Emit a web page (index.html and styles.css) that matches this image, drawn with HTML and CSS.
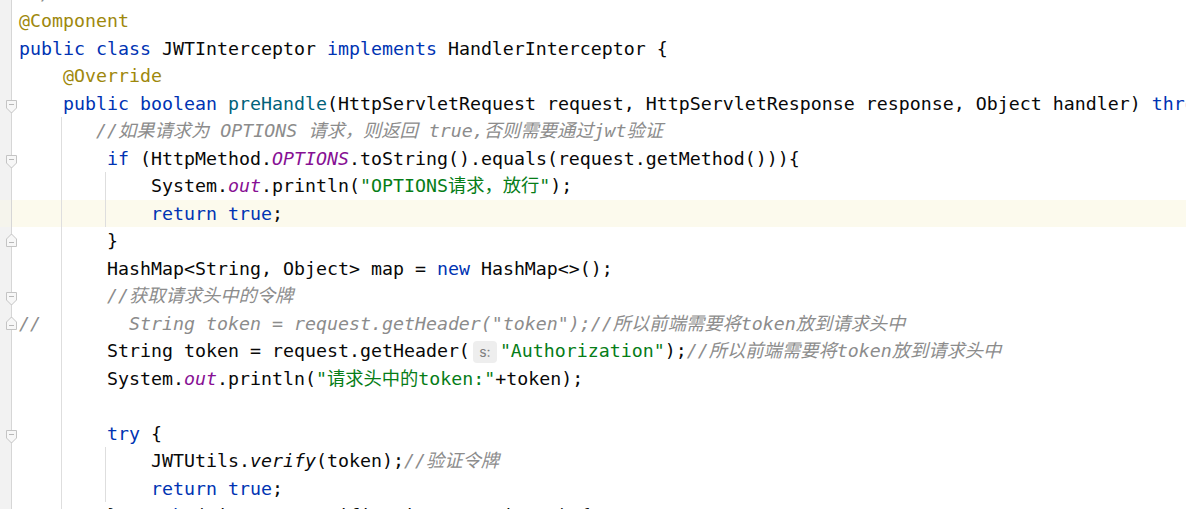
FILE: index.html
```html
<!DOCTYPE html>
<html lang="zh">
<head>
<meta charset="utf-8">
<title>JWTInterceptor.java</title>
<link rel="stylesheet" href="styles.css">
</head>
<body>
<div class="editor">
  <div class="row"><div class="gut"></div><div class="code"><span class="c"> */</span></div></div>
  <div class="row"><div class="gut"></div><div class="code"><span class="a">@Component</span></div></div>
  <div class="row"><div class="gut"></div><div class="code"><span class="k">public class</span> JWTInterceptor <span class="k">implements</span> HandlerInterceptor {</div></div>
  <div class="row"><div class="gut"></div><div class="code">    <span class="a">@Override</span></div></div>
  <div class="row"><div class="gut"><svg class="fold start" width="12" height="14" viewBox="0 0 12 14"><path d="M0.5 0.5H10.5V8L5.5 13L0.5 8Z"/><path d="M3 4.5H8"/></svg></div><div class="code">    <span class="k">public boolean</span> <span class="m">preHandle</span>(HttpServletRequest request, HttpServletResponse response, Object handler) <span class="k">throws</span> Exception {</div></div>
  <div class="row g1"><div class="gut"></div><div class="code">       <span class="c">//如果请求为 OPTIONS 请求，则返回 true,否则需要通过jwt验证</span></div></div>
  <div class="row g1"><div class="gut"><svg class="fold start" width="12" height="14" viewBox="0 0 12 14"><path d="M0.5 0.5H10.5V8L5.5 13L0.5 8Z"/><path d="M3 4.5H8"/></svg></div><div class="code">        <span class="k">if</span> (HttpMethod.<span class="f">OPTIONS</span>.toString().equals(request.getMethod())){</div></div>
  <div class="row g2"><div class="gut"></div><div class="code">            System.<span class="f">out</span>.println(<span class="s">"OPTIONS请求，放行"</span>);</div></div>
  <div class="row g2 cur"><div class="gut"></div><div class="code">            <span class="k">return true</span>;</div></div>
  <div class="row g1"><div class="gut"><svg class="fold end" width="12" height="14" viewBox="0 0 12 14"><path d="M0.5 13.5H10.5V6L5.5 1L0.5 6Z"/><path d="M3 9.5H8"/></svg></div><div class="code">        }</div></div>
  <div class="row g1"><div class="gut"></div><div class="code">        HashMap&lt;String, Object&gt; map = <span class="k">new</span> HashMap&lt;&gt;();</div></div>
  <div class="row g1"><div class="gut"><svg class="fold start" width="12" height="14" viewBox="0 0 12 14"><path d="M0.5 0.5H10.5V8L5.5 13L0.5 8Z"/><path d="M3 4.5H8"/></svg></div><div class="code">        <span class="c">//获取请求头中的令牌</span></div></div>
  <div class="row g1"><div class="gut"><svg class="fold end" width="12" height="14" viewBox="0 0 12 14"><path d="M0.5 13.5H10.5V6L5.5 1L0.5 6Z"/><path d="M3 9.5H8"/></svg></div><div class="code"><span class="c">//        String token = request.getHeader("token");//所以前端需要将token放到请求头中</span></div></div>
  <div class="row g1"><div class="gut"></div><div class="code">        String token = request.getHeader(<span class="hint">s:</span><span class="s">"Authorization"</span>);<span class="c">//所以前端需要将token放到请求头中</span></div></div>
  <div class="row g1"><div class="gut"></div><div class="code">        System.<span class="f">out</span>.println(<span class="s">"请求头中的token:"</span>+token);</div></div>
  <div class="row g1"><div class="gut"></div><div class="code"> </div></div>
  <div class="row g1"><div class="gut"><svg class="fold start" width="12" height="14" viewBox="0 0 12 14"><path d="M0.5 0.5H10.5V8L5.5 13L0.5 8Z"/><path d="M3 4.5H8"/></svg></div><div class="code">        <span class="k">try</span> {</div></div>
  <div class="row g2"><div class="gut"></div><div class="code">            JWTUtils.<span class="i">verify</span>(token);<span class="c">//验证令牌</span></div></div>
  <div class="row g2"><div class="gut"></div><div class="code">            <span class="k">return true</span>;</div></div>
  <div class="row g1"><div class="gut"></div><div class="code">        } <span class="k">catch</span> (SignatureVerificationException e) {</div></div>
</div>
</body>
</html>
```
FILE: styles.css
```css
html, body {
  margin: 0;
  padding: 0;
  background: #ffffff;
  overflow: hidden;
  height: 509px;
}

.editor {
  margin-top: -20.5px;
  font-family: "DejaVu Sans Mono", "Noto Sans CJK SC", monospace;
  font-size: 18.27px;
  line-height: 27.5px;
  color: #080808;
}

.row {
  display: flex;
  height: 27.5px;
}

.gut {
  position: relative;
  flex: 0 0 11px;
  background: #f2f2f2;
  border-right: 1px solid #d6d6d6;
}

.code {
  flex: 1;
  padding-left: 7px;
  white-space: pre;
  overflow: hidden;
}

.g1 .code {
  background: linear-gradient(#dedede, #dedede) no-repeat 49px 0 / 1px 100%;
}

.g2 .code {
  background:
    linear-gradient(#dedede, #dedede) no-repeat 49px 0 / 1px 100%,
    linear-gradient(#dedede, #dedede) no-repeat 93px 0 / 1px 100%;
}

.cur .code {
  background-color: #fcfaed;
}

.cur .gut {
  background: #f5f4ec;
}

.fold {
  position: absolute;
  left: 5.5px;
  z-index: 1;
}

.fold.start { top: 10px; }
.fold.end { top: 6px; }

.fold path:first-child {
  fill: #f7f7f7;
  stroke: #c4c4c4;
  stroke-width: 1;
}

.fold path:last-child {
  fill: none;
  stroke: #b8b8b8;
  stroke-width: 1;
}

.k { color: #0033b3; }
.a { color: #9e880d; }
.m { color: #00627a; }
.f { color: #871094; font-style: italic; }
.s { color: #067d17; }
.c { color: #8c8c8c; font-style: italic; }
.i { font-style: italic; }

.hint {
  display: inline-block;
  width: 24px;
  height: 22px;
  margin: 0 3px 0 3px;
  vertical-align: middle;
  line-height: 22px;
  text-align: center;
  border-radius: 4px;
  background: #eeeeee;
  color: #7f7f7f;
  font-family: "Inter", "DejaVu Sans", sans-serif;
  font-size: 14px;
  font-style: normal;
}
```
